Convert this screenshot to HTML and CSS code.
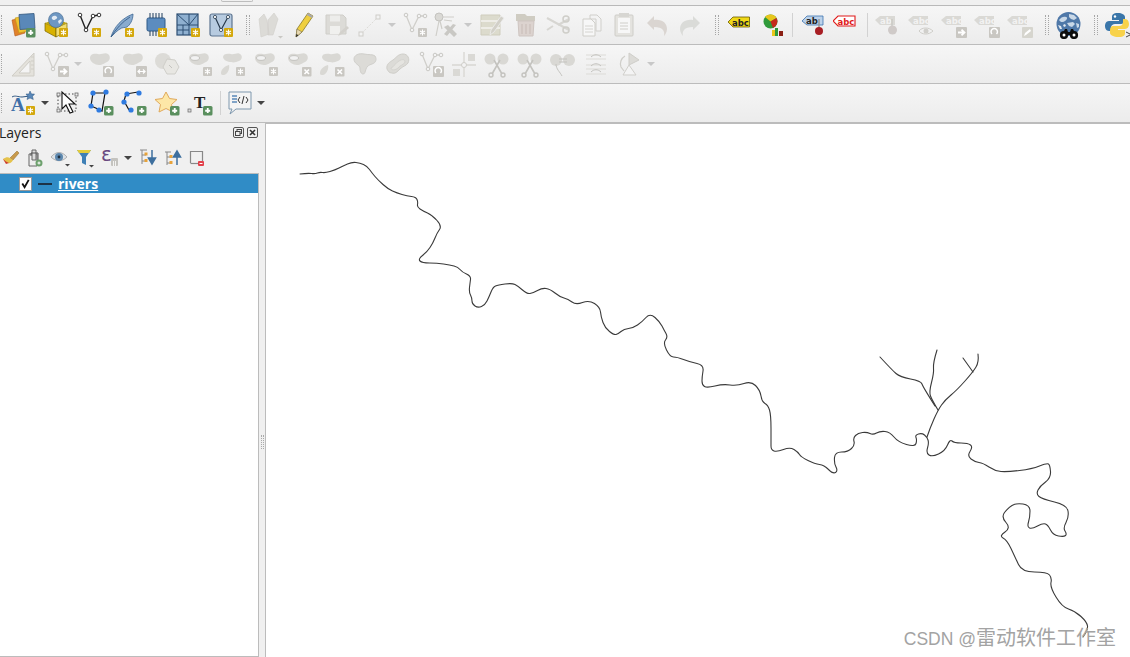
FILE: index.html
```html
<!DOCTYPE html>
<html lang="en">
<head>
<meta charset="utf-8">
<title>QGIS</title>
<link rel="stylesheet" href="styles.css">
</head>
<body>
<svg class="defs" aria-hidden="true">
  <defs>
    <g id="bp"><rect x="17" y="17" width="9.5" height="9.5" rx="1.5" fill="#5a8f5e"/><path d="M21.75 19v5M19.2 21.75h5" stroke="#fff" stroke-width="1.8"/></g>
    <g id="bs"><rect x="17" y="17" width="9" height="9" rx="1" fill="#d4a80c"/><path d="M21.5 18.5v6M19 20l5 3M24 20l-5 3" stroke="#fff" stroke-width="1.1"/></g>
    <g id="gs"><rect x="17" y="17" width="9" height="9" rx="1" fill="#c9c7c2"/><path d="M21.5 18.5v6M19 20l5 3M24 20l-5 3" stroke="#fff" stroke-width="1.1"/></g>
    <g id="gx"><rect x="17" y="17" width="9.5" height="9.5" rx="1" fill="#c9c7c2"/><path d="M19.5 19.5l4.5 4.5M24 19.5l-4.5 4.5" stroke="#fff" stroke-width="1.6"/></g>
    <g id="gr"><rect x="16" y="16" width="11" height="11" rx="1" fill="#c9c7c2"/><path d="M18 21.5h5.5M21.5 18.6l3 2.9-3 2.9" fill="none" stroke="#fff" stroke-width="1.8"/></g>
    <g id="grot"><rect x="16" y="16" width="11" height="11" rx="1" fill="#c9c7c2"/><path d="M19 23a3.2 3.2 0 1 1 4.5 0" fill="none" stroke="#fff" stroke-width="1.5"/></g>
    <g id="blob"><path d="M3 8c0-4 4-5 8-4 3 1 7-2 10 0 3 2 2 7-1 8-3 1-4 3-8 3-4 0-9-3-9-7z" fill="#d9d8d4"/></g>
    <g id="ring"><path d="M3 8c0-4 4-5 8-4 3 1 7-2 10 0 3 2 2 7-1 8-3 1-4 3-8 3-4 0-9-3-9-7z" fill="#d9d8d4"/><ellipse cx="9" cy="8" rx="4.5" ry="2.4" fill="#f2f2f2" stroke="#c4c3bf"/></g>
    <g id="two"><path d="M4 7c0-3 4-4 8-3 3 1 7-2 9 0 3 2 2 6-1 7-3 1-5 2-8 1-3 0-8-2-8-5z" fill="#d9d8d4"/><path d="M2 23c0-4 4-7 8-8 1 3-1 9-5 10-2 0-3 0-3-2z" fill="#d9d8d4"/></g>
    <g id="gv"><path d="M5 4l6 15 7-14h5" fill="none" stroke="#d0cfcb" stroke-width="1.3"/><g fill="#f3f3f3" stroke="#c9c8c4"><circle cx="5" cy="4" r="1.8"/><circle cx="11" cy="19" r="1.8"/><circle cx="18" cy="5" r="1.8"/><circle cx="24" cy="5" r="1.8"/></g></g>
    <g id="dv"><path d="M5 4l6 15 7-14 6-1" fill="none" stroke="#222" stroke-width="1.4"/><g fill="#fff" stroke="#333"><circle cx="5" cy="4" r="1.8"/><circle cx="11" cy="19" r="1.8"/><circle cx="18" cy="5" r="1.8"/><circle cx="24" cy="4" r="1.8"/></g></g>
    <g id="gtag"><path d="M1 9l5-4h15v9H6z" fill="#dad9d5"/></g>
    <g id="scis"><circle cx="7" cy="9" r="5.5" fill="#d9d8d4"/><circle cx="20" cy="9" r="5.5" fill="#d9d8d4"/><path d="M11 10l8 14M17 10l-8 14" stroke="#c4c3bf" stroke-width="1.6"/><circle cx="8" cy="25" r="2" fill="none" stroke="#c4c3bf" stroke-width="1.4"/><circle cx="20" cy="25" r="2" fill="none" stroke="#c4c3bf" stroke-width="1.4"/></g>
  </defs>
</svg>

<div class="strip"><span class="strip-tab"></span></div>

<div class="toolbar">
  <span class="h h-first"><i></i></span>
  <span class="b"><svg viewBox="0 0 28 28"><path d="M3 9l10-2 3 15-10 3z" fill="#e0822a" stroke="#b5591a" stroke-width=".6"/><path d="M6 7l9-2 4 15-9 2z" fill="#f0c330" stroke="#c09512" stroke-width=".6"/><path d="M10 3.500l15-1 1 15-15 1z" fill="#5a88b8" stroke="#34587f" stroke-width=".8"/><use href="#bp"/></svg></span>
  <span class="b"><svg viewBox="0 0 28 28"><path d="M3 12l11 5v9L3 20z" fill="#d8b100" stroke="#7a6400" stroke-width=".7"/><path d="M14 17l11-5v8l-11 6z" fill="#f2dd70" stroke="#7a6400" stroke-width=".7"/><path d="M3 12l11-4 11 4-11 5z" fill="#c0a510"/><circle cx="14" cy="9" r="7.500" fill="#6e97c2" stroke="#43688f" stroke-width=".6"/><path d="M10 6c2-2 4-1 5 0s-2 3-3 3-3-1-2-3zM16 10l3-2 1 2-3 3z" fill="#e3ebf3"/><use href="#bs"/></svg></span>
  <span class="b"><svg viewBox="0 0 28 28"><use href="#dv"/><use href="#bs"/></svg></span>
  <span class="b"><svg viewBox="0 0 28 28"><path d="M3 26C6 16 14 7 25 3c0 6-3 11-6 13-2 1-5 0-7 2-2 1-4 3-6 5z" fill="#89abcf" stroke="#3f6894" stroke-width=".8"/><path d="M3 26C8 18 14 11 22 6" fill="none" stroke="#2f5681" stroke-width=".8"/><use href="#bs"/></svg></span>
  <span class="b"><svg viewBox="0 0 28 28"><rect x="6" y="7" width="18" height="13" rx="1.500" fill="#5c8cbf" stroke="#2f5a88"/><path d="M9 7V2M12 7V2M15 7V2M18 7V2M21 7V2M9 25v-5M12 25v-5M15 25v-5" stroke="#1e3c5c" stroke-width="1"/><use href="#bs"/></svg></span>
  <span class="b"><svg viewBox="0 0 28 28"><rect x="3" y="3" width="21" height="21" fill="#8fb0d0" stroke="#2d4f73" stroke-width="1.200"/><path d="M3 3l12 11V3M15 14L24 3M3 14h21M15 14v10M9 14v10" fill="none" stroke="#2d4f73" stroke-width="1"/><path d="M3 19h12" stroke="#2d4f73"/><use href="#bs"/></svg></span>
  <span class="b"><svg viewBox="0 0 28 28"><rect x="3" y="3" width="22" height="22" rx="2" fill="#b7cbe0" stroke="#5d7590" stroke-width="1.200"/><path d="M8 6l6 13 7-13" fill="none" stroke="#26384b" stroke-width="1.200"/><g fill="#fff" stroke="#26384b" stroke-width=".8"><circle cx="8" cy="6" r="1.600"/><circle cx="14" cy="19" r="1.600"/><circle cx="21" cy="6" r="1.600"/></g><use href="#bs"/></svg></span>
  <span class="h"><i></i></span>
  <span class="b"><svg viewBox="0 0 28 28"><path d="M5 26L3 8l5-5 3 6 2 14zM12 24L12 9l6-7 4 6-5 16z" fill="#dcdbd7" stroke="#d0cfca" stroke-width=".6"/><path d="M22 25h5l-2.500 2.500z" fill="#c9c8c4"/></svg></span>
  <span class="b"><svg viewBox="0 0 28 28"><path d="M7 26l1-8L19 2l5 3-11 16z" fill="#efcf3f" stroke="#8a7a2a" stroke-width=".8"/><path d="M19 2l5 3-1.200 2-5-3z" fill="#aaa"/><path d="M7 26l1-8 5 3z" fill="#e8d9b0" stroke="#6b6348" stroke-width=".5"/><path d="M7 26l.4-3 2 1.200z" fill="#222"/></svg></span>
  <span class="b"><svg viewBox="0 0 28 28"><path d="M4 4h17l3 3v16H4z" fill="#dcdbd7" stroke="#cfcec9"/><rect x="8" y="4.500" width="10" height="6" fill="#ededeb"/><rect x="8" y="15" width="10" height="8" fill="#f0f0ee"/><path d="M16 25l2-4 7-6 2 2-7 6z" fill="#d3d1cc"/></svg></span>
  <span class="b"><svg viewBox="0 0 28 28"><path d="M7 22L22 7" stroke="#dcdbd7" stroke-dasharray="2 1.500"/><rect x="4" y="21" width="4" height="4" fill="#f3f3f3" stroke="#cfcec9"/><rect x="21" y="4" width="4" height="4" fill="#f3f3f3" stroke="#cfcec9"/></svg></span>
  <span class="a a13 off"></span>
  <span class="b"><svg viewBox="0 0 28 28"><use href="#gv"/><use href="#gs"/></svg></span>
  <span class="b b29"><svg viewBox="0 0 28 28"><circle cx="7" cy="6" r="4" fill="#dad9d5" stroke="#c4c3bf"/><path d="M4 25l3-15M8 10l2 8M10 6l12 0M12 9l8 1" stroke="#cfcec9" stroke-width="1.200"/><path d="M12 16l4-2 9 9-3 3-9-9zM21 13l3 1-9 11-3-2z" fill="#c9c8c4"/></svg></span>
  <span class="a a15 off"></span>
  <span class="b"><svg viewBox="0 0 28 28"><path d="M3 4h19v20H3z" fill="#dcdbcd" stroke="#cfcdbd"/><path d="M3 10h19M3 17h19" stroke="#f3f3f0" stroke-width="1.400"/><path d="M12 24l1-5L23 5l3 2-10 14z" fill="#d2d0c8" stroke="#eee" stroke-width=".8"/></svg></span>
  <span class="b"><svg viewBox="0 0 28 28"><path d="M5 3h9l2 2h8v5H5z" fill="#cfccc2"/><path d="M7 10h16l-1 15H8z" fill="#dcd3cf" stroke="#cec5c1"/><path d="M11 13v10M15 13v10M19 13v10" stroke="#c7bbb6"/></svg></span>
  <span class="b"><svg viewBox="0 0 28 28"><path d="M3 7l22 12M3 19l6-4M25 8L14 14" stroke="#d7d6d2" stroke-width="2"/><circle cx="22" cy="8" r="3" fill="none" stroke="#cfcec9" stroke-width="1.500"/><circle cx="22" cy="19" r="3" fill="none" stroke="#cfcec9" stroke-width="1.500"/></svg></span>
  <span class="b"><svg viewBox="0 0 28 28"><path d="M13 4h7l4 4v12h-5V8h-6z" fill="#f3f3f3" stroke="#d0cfcb"/><path d="M6 8h8l4 4v13H6z" fill="#f7f7f7" stroke="#cfcec9"/><path d="M8 15h8M8 18h8M8 21h8" stroke="#d5d4d0"/></svg></span>
  <span class="b"><svg viewBox="0 0 28 28"><rect x="5" y="4" width="18" height="21" rx="1" fill="#e4e3df" stroke="#cecdc8"/><rect x="8" y="7" width="12" height="15" fill="#f7f7f7"/><rect x="9" y="2" width="10" height="4" fill="#d7d6d2"/><path d="M10 12h8M10 15h8M10 18h8" stroke="#cfcec9"/></svg></span>
  <span class="b"><svg viewBox="0 0 28 28"><path d="M4 12l7-7v4c8-1 13 3 13 9 0 3-2 6-3 7 1-5-1-9-10-9v3z" fill="#dad5d1"/></svg></span>
  <span class="b"><svg viewBox="0 0 28 28"><path d="M24 12l-7-7v4c-8-1-13 3-13 9 0 3 2 6 3 7-1-5 1-9 10-9v3z" fill="#dadbd8"/></svg></span>
  <span class="h"><i></i></span>
  <span class="b"><svg viewBox="0 0 28 28"><path d="M3 11l5-5h16.500v10H8z" fill="#f0d817" stroke="#6b5c00" stroke-width=".8"/><text x="7" y="14.500" class="ic-t">abc</text></svg></span>
  <span class="b"><svg viewBox="0 0 28 28"><circle cx="12.500" cy="10.500" r="7" fill="#2f9a3a"/><path d="M7 6a7 7 0 0 1 11.500 1l-6 3.500z" fill="#e8c61c"/><path d="M12.500 10.500l6-3.500a7 7 0 0 1-3.500 10z" fill="#c52a1c"/><rect x="14" y="19" width="3" height="6" fill="#e8c61c"/><rect x="17" y="17" width="3" height="8" fill="#2f9a3a"/><rect x="21" y="20" width="4" height="5" fill="#8a1f14"/></svg></span>
  <span class="s"></span>
  <span class="b"><svg viewBox="0 0 28 28"><path d="M2 10l5-5h16v9H7z" fill="#bcd2ea" stroke="#3e74b0" stroke-width=".8"/><text x="6" y="13" class="ic-t">ab</text><path d="M19 8v10" stroke="#999" stroke-width="1.500"/><circle cx="19" cy="20" r="4" fill="#a81e24"/></svg></span>
  <span class="b"><svg viewBox="0 0 28 28"><path d="M0 10l5-5h17v10H5z" fill="#fff" stroke="#e01b1b" stroke-width="1.100"/><text x="4.500" y="13.500" class="ic-t ic-red">abc</text></svg></span>
  <span class="s s8"></span>
  <span class="b"><svg viewBox="0 0 28 28"><use href="#gtag"/><text x="6" y="13" class="ic-t ic-g">ab</text><path d="M18 8v8" stroke="#c9c8c4" stroke-width="1.500"/><circle cx="18.500" cy="19" r="4.500" fill="#cfcac8"/></svg></span>
  <span class="b"><svg viewBox="0 0 28 28"><use href="#gtag"/><text x="6" y="13" class="ic-t ic-g">abc</text><path d="M12 20c3-4 10-4 14 0-4 4-11 4-14 0z" fill="#f1f1f1" stroke="#cfcec9"/><circle cx="19" cy="20" r="2.500" fill="#d0cfcb"/></svg></span>
  <span class="b"><svg viewBox="0 0 28 28"><use href="#gtag"/><text x="6" y="13" class="ic-t ic-g">abc</text><use href="#gr"/></svg></span>
  <span class="b"><svg viewBox="0 0 28 28"><use href="#gtag"/><text x="6" y="13" class="ic-t ic-g">abc</text><use href="#grot"/></svg></span>
  <span class="b"><svg viewBox="0 0 28 28"><use href="#gtag"/><text x="6" y="13" class="ic-t ic-g">abc</text><rect x="16" y="16" width="11" height="11" rx="1" fill="#d6d5ce"/><path d="M18 25l1-3 5-4 1 2-5 4z" fill="#fff"/></svg></span>
  <span class="h"><i></i></span>
  <span class="b"><svg viewBox="0 0 28 28"><circle cx="13.500" cy="13" r="12" fill="#4f78a8"/><path d="M4 9c2-3 5-4 7-3 2 0 1 3-1 4-2 2-5 1-6-1zM14 3l5 1 3 3-3 2-3-1-2-2zM12 12l6-1 2 2-3 3-3-1zM21 12l3 1 0 3-2 1z" fill="#c9d8e7"/><path d="M3 14l3 1 1 3-2 0zM9 13l2 1-1 2-2-1z" fill="#e2e9f0"/><path d="M7 24l3-6h2l1 3h2l1-3h2l3 6z" fill="#0d0d0d"/><circle cx="9" cy="24" r="2.800" fill="#fff" stroke="#0d0d0d" stroke-width="2.600"/><circle cx="19" cy="24" r="2.800" fill="#fff" stroke="#0d0d0d" stroke-width="2.600"/></svg></span>
  <span class="h"><i></i></span>
  <span class="b"><svg viewBox="0 0 28 28"><path d="M14 2c-5 0-6 2-6 4v3h7v1H5c-3 0-4 3-4 5s1 5 4 5h2v-3c0-3 2-4 4-4h6c2 0 4-2 4-4V6c0-2-3-4-7-4z" fill="#3a76a9"/><path d="M14 25c5 0 6-2 6-4v-3h-7v-1h7c3 0 4-3 4-5s-1-5-4-5h-2v3c0 3-2 4-4 4H8c-2 0-3 2-3 4v3c0 2 4 4 8 4z" fill="#f8d24a" transform="translate(1 1)"/><circle cx="11" cy="5.500" r="1.200" fill="#fff"/><path d="M22 21l5 2.500-5 2.500" fill="none" stroke="#444"/></svg></span>
</div>

<div class="toolbar">
  <span class="h h-first"><i></i></span>
  <span class="b"><svg viewBox="0 0 28 28"><path d="M3 26L25 3v23z" fill="#e4e2dc" stroke="#cfcdc6"/><path d="M10 23l11-12v12z" fill="#f4f4f4" stroke="#cfcdc6"/><path d="M22 7h3M22 11h3M22 15h3M22 19h3" stroke="#cfcdc6"/></svg></span>
  <span class="b"><svg viewBox="0 0 28 28"><use href="#gv"/><use href="#gr"/></svg></span>
  <span class="a off"></span>
  <span class="b"><svg viewBox="0 0 28 28"><use href="#blob"/><use href="#grot"/></svg></span>
  <span class="b"><svg viewBox="0 0 28 28"><use href="#blob"/><rect x="16" y="16" width="11" height="11" rx="1" fill="#c9c7c2"/><path d="M18 21.500h7M20 19.500l-2 2 2 2M23 19.500l2 2-2 2" fill="none" stroke="#fff" stroke-width="1.200"/></svg></span>
  <span class="b"><svg viewBox="0 0 28 28"><circle cx="10" cy="11" r="8" fill="#dcdbd7"/><path d="M14 9l8 1 4 7-4 7h-8l-4-7z" fill="#e8e7e3" stroke="#cfcec9"/><path d="M16 15l3 3" stroke="#c4c3bf"/></svg></span>
  <span class="b"><svg viewBox="0 0 28 28"><use href="#ring"/><use href="#gs"/></svg></span>
  <span class="b"><svg viewBox="0 0 28 28"><use href="#two"/><use href="#gs"/></svg></span>
  <span class="b"><svg viewBox="0 0 28 28"><use href="#ring"/><use href="#gs"/></svg></span>
  <span class="b"><svg viewBox="0 0 28 28"><use href="#ring"/><use href="#gx"/></svg></span>
  <span class="b"><svg viewBox="0 0 28 28"><use href="#two"/><use href="#gx"/></svg></span>
  <span class="b"><svg viewBox="0 0 28 28"><path d="M3 9c0-4 5-6 10-5 4 1 9 0 11 2 2 3 1 7-3 8-3 1-5 2-6 5-1 3-1 5-3 5s-3-3-3-6c0-3-6-4-6-9z" fill="#dcdbd7" stroke="#d0cfcb"/></svg></span>
  <span class="b"><svg viewBox="0 0 28 28"><path d="M3 19c-1-5 3-7 6-9 3-2 5-6 10-6 5 0 7 5 5 9-2 3-5 3-8 6-3 3-5 5-8 4-3 0-4-2-5-4z" fill="#dcdbd7" stroke="#cfcec9"/><path d="M7 18c3-1 4-5 8-7 3-2 6-2 6 1-1 3-5 3-7 6-2 2-7 3-7 0z" fill="#e5e4e0" stroke="#d4d3cf"/></svg></span>
  <span class="b"><svg viewBox="0 0 28 28"><use href="#gv"/><use href="#grot"/></svg></span>
  <span class="b"><svg viewBox="0 0 28 28"><path d="M14 2v25M2 15h24" stroke="#d7d6d2" stroke-width="1.300"/><circle cx="14" cy="15" r="2.500" fill="#f3f3f3" stroke="#cfcec9"/><rect x="18" y="4" width="7" height="7" fill="#dad9d5"/><rect x="3" y="19" width="7" height="7" fill="#dad9d5"/></svg></span>
  <span class="b"><svg viewBox="0 0 28 28"><use href="#scis"/></svg></span>
  <span class="b"><svg viewBox="0 0 28 28"><use href="#scis"/></svg></span>
  <span class="b"><svg viewBox="0 0 28 28"><circle cx="7" cy="10" r="6" fill="#d9d8d4"/><circle cx="20" cy="10" r="6" fill="#d9d8d4"/><path d="M10 9h8M10 12h8M7 14c0 5 4 8 6 12" fill="none" stroke="#c4c3bf"/></svg></span>
  <span class="b"><svg viewBox="0 0 28 28"><path d="M4 5h20M4 15h20M4 24h20M4 9h20M4 19h20" stroke="#dcdbd7"/><path d="M9 7c3-3 7-3 10 0M9 16c3-3 7-3 10 0M9 22c3-3 7-3 10 0" fill="none" stroke="#c4c3bf"/></svg></span>
  <span class="b"><svg viewBox="0 0 28 28"><path d="M14 3l10 7-10 5z" fill="#dcdbd7" stroke="#cfcec9"/><path d="M14 15l7 10H8z" fill="#f4f4f4" stroke="#d0cfcb"/><path d="M10 6a9 9 0 0 0-4 11l3 4" fill="none" stroke="#cfcec9" stroke-width="1.200"/></svg></span>
  <span class="a off"></span>
</div>

<div class="toolbar">
  <span class="h h-first"><i></i></span>
  <span class="b"><svg viewBox="0 0 28 28"><path d="M3 8c3-2 6 0 10 0 3 0 5-1 8-1" fill="none" stroke="#2f5681"/><text x="2" y="22" class="ic-a">A</text><path d="M21 2l1.500 3h3l-2 2.500.8 3L21 9l-3 1.500.8-3L17 5h3z" fill="#5a88b8" stroke="#2f5681" stroke-width=".5"/><use href="#bs"/></svg></span>
  <span class="a"></span>
  <span class="b"><svg viewBox="0 0 28 28"><rect x="4" y="5" width="18" height="17" fill="none" stroke="#444" stroke-dasharray="1.500 2"/><rect x="3" y="4" width="3" height="3" fill="#eee" stroke="#555" stroke-width=".7"/><rect x="21" y="4" width="3" height="3" fill="#eee" stroke="#555" stroke-width=".7"/><rect x="3" y="20" width="3" height="3" fill="#eee" stroke="#555" stroke-width=".7"/><path d="M8 3v17l4-4 4 8 3-1-4-8h6z" fill="#fff" stroke="#111" stroke-width="1.100"/></svg></span>
  <span class="b"><svg viewBox="0 0 28 28"><path d="M6 4h12l-3 18-4-2-7-3z" fill="#dfe7f2" fill-opacity=".35" stroke="#111" stroke-width="1.200"/><g fill="#2f7be0"><circle cx="6" cy="4" r="2.600"/><circle cx="19" cy="3" r="2.600"/><circle cx="4" cy="17" r="2.600"/><circle cx="12" cy="21" r="2.600"/></g><use href="#bp"/></svg></span>
  <span class="b"><svg viewBox="0 0 28 28"><path d="M6 5l12-2M6 5L4 12l5 9" fill="none" stroke="#111" stroke-width="1.200"/><g fill="#2f7be0"><circle cx="7" cy="5" r="2.600"/><circle cx="19" cy="4" r="2.600"/><circle cx="4" cy="13" r="2.600"/><circle cx="11" cy="21" r="2.600"/></g><use href="#bp"/></svg></span>
  <span class="b"><svg viewBox="0 0 28 28"><path d="M13 3l3.500 6.500 7.500 1-5.500 5 1.500 7.500-7-3.500-7 3.500 1.500-7.500L2 10.500l7.500-1z" fill="#fde7a7" stroke="#e0a95c"/><use href="#bp"/></svg></span>
  <span class="b"><svg viewBox="0 0 28 28"><text x="8" y="19" class="ic-tt">T</text><rect x="2" y="20" width="3" height="3" fill="#ddd" stroke="#666" stroke-width=".7"/><use href="#bp"/></svg></span>
  <span class="s s8"></span>
  <span class="b b31"><svg viewBox="0 0 28 28"><path d="M3 3h22v17H10l-6 5 2-5H3z" fill="#f4f4f4" stroke="#7e98ae"/><path d="M6 7h5M6 10h5M6 13h5" stroke="#5a88b8" stroke-width="1.300"/><path d="M14 8l-2 3 2 3M20 8l2 3-2 3M18 7l-2 8" fill="none" stroke="#333"/></svg></span>
  <span class="a"></span>
</div>

<main class="workspace">
  <aside class="dock">
    <div class="dock-title">
      <span class="dock-name">Layers</span>
      <span class="dock-btns">
        <svg class="dock-btn" viewBox="0 0 11 11"><rect x=".5" y=".5" width="10" height="10" rx="1.500" fill="none" stroke="#555"/><rect x="4" y="2.500" width="4.500" height="4" fill="none" stroke="#444"/><rect x="2.500" y="4.500" width="4.500" height="4" fill="#eee" stroke="#444"/></svg>
        <svg class="dock-btn" viewBox="0 0 11 11"><rect x=".5" y=".5" width="10" height="10" rx="1.500" fill="none" stroke="#555"/><path d="M3 3l5 5M8 3L3 8" stroke="#333" stroke-width="1.600"/></svg>
      </span>
    </div>
    <div class="dock-tools">
      <span class="p p22"><svg viewBox="0 0 20 20"><path d="M9 10l7-7 2 2-6 7z" fill="#c99a4b" stroke="#8c6a2c" stroke-width=".5"/><path d="M2 11c3-2 5-2 7-1l3 2c-1 2-3 4-5 3-2 0-4-2-5-4z" fill="#e5c34c"/><path d="M2 11c2 2 4 3 6 4l-3 1z" fill="#cc3c2f"/></svg></span>
      <span class="p p25"><svg viewBox="0 0 20 20"><path d="M4 6h8v12H4z" fill="#eee" stroke="#666"/><path d="M7 2h4v10H7z" fill="#ddd" stroke="#666"/><path d="M6 8v-3h7v7" fill="none" stroke="#555"/><circle cx="14" cy="15" r="3.500" fill="#6ea16e"/><path d="M12.500 15h3M14 13.500v3" stroke="#fff"/></svg></span>
      <span class="p p25"><svg viewBox="0 0 20 20"><path d="M1 9c5-6 11-6 16 0-5 5-11 5-16 0z" fill="#dde2e6" stroke="#999" stroke-width=".7"/><circle cx="9" cy="9" r="4" fill="#5d87ad"/><circle cx="9" cy="9" r="1.400" fill="#203040"/><path d="M15 16h5l-2.500 2.500z" fill="#444"/></svg></span>
      <span class="p p25"><svg viewBox="0 0 20 20"><path d="M2 2h14l-5 7v8l-4-2V9z" fill="#3e7fb5"/><path d="M2 2h14l-2 3H4z" fill="#e3cc3a"/><path d="M14 17h5l-2.500 2.500z" fill="#444"/></svg></span>
      <span class="p p26"><svg viewBox="0 0 20 20"><text x="1" y="13" class="ic-e">ε</text><rect x="11" y="10" width="7" height="8" rx="1" fill="#c4c3bf"/><path d="M13.500 18v-5M15.500 18v-5" stroke="#fff" stroke-width=".8"/></svg></span>
      <span class="a a10"></span>
      <span class="p p30"><svg viewBox="0 0 20 20"><path d="M2 2h7M4 2v14M4 7h4M4 13h4" fill="none" stroke="#888"/><rect x="6.500" y="4.500" width="3" height="3" fill="#e8a33a"/><rect x="6.500" y="11" width="3" height="3" fill="#e8a33a"/><path d="M14 2v10M10.500 10l3.500 6 3.500-6z" fill="#3e6f9e" stroke="#3e6f9e" stroke-width="1.500"/></svg></span>
      <span class="p p20"><svg viewBox="0 0 20 20"><path d="M2 4h6M4 4v13M4 9h4M4 15h4" fill="none" stroke="#888"/><rect x="6.500" y="7" width="3" height="3" fill="#e8a33a"/><rect x="6.500" y="13" width="3" height="3" fill="#e8a33a"/><path d="M14 17V8M10.500 9L14 3l3.500 6z" fill="#3e6f9e" stroke="#3e6f9e" stroke-width="1.500"/></svg></span>
      <span class="p p28"><svg viewBox="0 0 20 20"><path d="M3.500 15V3.500h12V13" fill="none" stroke="#888" stroke-width="1.200"/><path d="M3.500 15.500H11" stroke="#888" stroke-width="1.200"/><rect x="11" y="13" width="6" height="5" rx="1" fill="#e2404a"/><path d="M12.500 15.500h3" stroke="#fff"/></svg></span>
    </div>
    <div class="tree">
      <div class="tree-row">
        <span class="check"><svg viewBox="0 0 12 12"><path d="M2.500 6l2.500 4L9.500 2" fill="none" stroke="#111" stroke-width="2"/></svg></span>
        <span class="sym"></span>
        <span class="layer-name">rivers</span>
      </div>
    </div>
  </aside>
  <div class="splitter"><span class="grip"></span></div>
  <section class="canvas">
    <svg class="map" viewBox="266 124 864 533">
      <g class="river">
        <path d="M300 174Q308 173 311.500 173.500Q315 174 317.500 173Q320 172 322.500 172.500Q325 173 330 171.500Q335 170 339 168Q343 166 347.500 164Q352 162 356 162.500Q360 163 363.500 164.500Q367 166 369.500 169.500Q372 173 375 176.500Q378 180 383 184.500Q388 189 392.500 191Q397 193 402 194.500Q407 196 411.500 196.500Q416 197 417 199.500Q418 202 417.500 204.500Q417 207 420 209Q423 211 427.500 213Q432 215 437 220.500Q442 226 439.500 229.500Q437 233 435 238Q433 243 430 247.500Q427 252 422.500 255.500Q418 259 420 261Q422 263 429.500 263Q437 263 443.500 264Q450 265 454 266Q458 267 460 269.500Q462 272 466.500 274Q471 276 470.500 279.500Q470 283 469.500 287.500Q469 292 470.500 295Q472 298 472 301Q472 304 475 306Q478 308 481.500 306.500Q485 305 487 301Q489 297 491 292Q493 287 495.500 286Q498 285 505 284Q512 283 515 284.500Q518 286 522.500 290Q527 294 530 293.500Q533 293 537.500 290.500Q542 288 546 288.500Q550 289 555 293Q560 297 564 298Q568 299 572 302Q576 305 582.500 302.500Q589 300 594.500 303.500Q600 307 600.500 312Q601 317 603 322.500Q605 328 609.500 331.500Q614 335 616 334.500Q618 334 621 331.500Q624 329 628.500 328.500Q633 328 637.500 325Q642 322 646 317.500Q650 313 655 317.500Q660 322 662 326Q664 330 666 333.500Q668 337 665.500 340Q663 343 666.500 350Q670 357 673.500 357Q677 357 683.500 359.500Q690 362 697 363.500Q704 365 703 371Q702 377 702 381Q702 385 704.500 386.500Q707 388 715 386Q723 384 730 385Q737 386 744 383.500Q751 381 755.500 385.500Q760 390 761 396Q762 402 765 403.500Q768 405 769.500 410Q771 415 771 428.500Q771 442 771 446Q771 450 774 451Q777 452 783.500 449.500Q790 447 794 449.500Q798 452 799.500 454.500Q801 457 808 460.500Q815 464 819.500 464.500Q824 465 828.500 469.500Q833 474 835.500 472.500Q838 471 836 467Q834 463 834.500 457.500Q835 452 841.500 452Q848 452 851.500 448.500Q855 445 854 441.500Q853 438 855.500 435.500Q858 433 862.500 432.500Q867 432 870 433.500Q873 435 876.500 433Q880 431 885 431.500Q890 432 894 437Q898 442 906.500 444.500Q915 447 916 443.500Q917 440 916 437.500Q915 435 918.500 434Q922 433 924.500 435Q927 437 928 440Q929 443 927.500 448Q926 453 929 455Q932 457 938.500 454Q945 451 947.500 445Q950 439 952 441Q954 443 961 443Q968 443 970.500 445Q973 447 970 451.500Q967 456 971 459Q975 462 979 462.500Q983 463 989 467Q995 471 1001 471.500Q1007 472 1019.500 470.500Q1032 469 1039.500 466Q1047 463 1048.500 464Q1050 465 1050.500 471.500Q1051 478 1045.500 482Q1040 486 1038 490Q1036 494 1039 496.500Q1042 499 1054.500 502Q1067 505 1068 511Q1069 517 1066 522.500Q1063 528 1065 531Q1067 534 1065.500 535.500Q1064 537 1058.500 536Q1053 535 1050.500 530Q1048 525 1045.500 524Q1043 523 1037.500 526Q1032 529 1029.500 528Q1027 527 1028.500 522Q1030 517 1030 511Q1030 505 1023 504Q1016 503 1012 505.500Q1008 508 1004.500 512.500Q1001 517 1006 522.500Q1011 528 1005 532Q999 536 1003 538Q1007 540 1011 548.500Q1015 557 1018.500 564.500Q1022 572 1034.500 572Q1047 572 1049.500 575Q1052 578 1051 582.500Q1050 587 1056 597Q1062 607 1068.500 609Q1075 611 1081 616.500Q1087 622 1087.500 626Q1088 630 1083 637"/>
        <path d="M927 437Q930 428 934 419Q938 410 941.500 405Q945 400 951 395Q957 390 965 381Q973 372 976 367Q979 362 978 354"/>
        <path d="M973 372Q968 365 963 358"/>
        <path d="M938 410Q932 400 930.500 396Q929 392 931.500 382.500Q934 373 933.500 368Q933 363 937 350"/>
        <path d="M935 406Q923 387 922 384Q921 381 910.500 379Q900 377 896 373.500Q892 370 880 357"/>
      </g>
    </svg>
    <span class="watermark"><span class="wm-latin">CSDN @</span><span class="wm-cjk">雷动软件工作室</span></span>
  </section>
</main>
</body>
</html>
```

FILE: styles.css
```css
* { box-sizing: border-box; }
html, body { margin: 0; height: 100%; }
body {
  width: 1130px;
  height: 657px;
  overflow: hidden;
  display: flex;
  flex-direction: column;
  background: #f0f0f0;
  font-family: "Open Sans", "Noto Sans", sans-serif;
  color: #222;
}
.defs { display: none; }

.strip {
  height: 6px;
  flex: none;
  background: #f0f0f0;
  border-bottom: 1px solid #b9b9b9;
  padding-left: 221px;
}
.strip-tab {
  display: block;
  width: 32px;
  height: 2px;
  border: 1px solid #bdbdbd;
  border-top: 0;
  border-radius: 0 0 2px 2px;
}

.toolbar {
  height: 39px;
  flex: none;
  display: flex;
  align-items: center;
  background: linear-gradient(#f6f6f6, #ececec);
  border-bottom: 1px solid #bcbcbc;
  overflow: hidden;
}
.b {
  flex: none;
  width: 33px;
  height: 38px;
  display: flex;
  align-items: center;
  justify-content: center;
}
.b svg { width: 28px; height: 28px; flex: none; display: block; }
.b29 { width: 29px; }
.b31 { width: 31px; }

.h {
  flex: none;
  width: 16px;
  height: 38px;
  padding-left: 9px;
  display: flex;
  align-items: center;
}
.h-first { width: 6px; padding-left: 1px; }
.h i {
  display: block;
  width: 4px;
  height: 20px;
  border-left: 1px dotted #a6a6a6;
  border-right: 1px dotted #a6a6a6;
}
.h-first i { width: 3px; border-right: 0; }

.a {
  flex: none;
  width: 12px;
  height: 38px;
  display: flex;
  align-items: center;
  justify-content: center;
}
.a::after {
  content: "";
  border-left: 4px solid transparent;
  border-right: 4px solid transparent;
  border-top: 4px solid #444;
}
.a.off::after { border-top-color: #c8c8c8; }
.a10 { width: 10px; height: 24px; }
.a13 { width: 13px; }
.a15 { width: 15px; }

.s {
  flex: none;
  width: 9px;
  height: 24px;
  display: flex;
  justify-content: center;
}
.s::after { content: ""; width: 1px; background: #d2d2d2; }
.s8 { width: 8px; }

.ic-t { font: bold 8.5px "DejaVu Sans", sans-serif; fill: #222; }
.ic-red { fill: #e01b1b; }
.ic-g { fill: #f2f2f2; }
.ic-a { font: bold 19px "Liberation Serif", serif; fill: #3f6fa8; }
.ic-tt { font: bold 17px "Liberation Serif", serif; fill: #222; }
.ic-e { font: 20px "DejaVu Sans", sans-serif; fill: #6a4a80; }

.workspace {
  flex: 1;
  min-height: 0;
  display: flex;
}
.dock {
  flex: none;
  width: 259px;
  display: flex;
  flex-direction: column;
}
.dock-title {
  height: 22px;
  flex: none;
  display: flex;
  align-items: center;
  justify-content: space-between;
  padding-right: 1px;
  padding-bottom: 4px;
}
.dock-name { font-size: 14px; margin-left: -1px; color: #222; }
.dock-btns { display: flex; gap: 3px; }
.dock-btn { width: 11px; height: 11px; display: block; }

.dock-tools {
  height: 28px;
  flex: none;
  display: flex;
  align-items: center;
  padding-bottom: 2px;
}
.p {
  flex: none;
  display: flex;
  justify-content: center;
  height: 20px;
}
.p svg { width: 20px; height: 20px; flex: none; display: block; overflow: visible; }
.p20 { width: 20px; }
.p22 { width: 22px; }
.p25 { width: 25px; }
.p26 { width: 26px; }
.p28 { width: 28px; }
.p30 { width: 30px; }

.tree {
  flex: 1;
  background: #fff;
  border: 1px solid #bcbcbc;
  border-left: 0;
}
.tree-row {
  height: 19px;
  background: #308cc6;
  display: flex;
  align-items: center;
  padding-left: 19px;
}
.check {
  width: 13px;
  height: 14px;
  flex: none;
  background: #fff;
  border: 1px solid #999;
  display: flex;
  align-items: center;
  justify-content: center;
}
.check svg { width: 11px; height: 11px; display: block; }
.sym {
  width: 14px;
  height: 2px;
  flex: none;
  margin-left: 6px;
  background: #1d3347;
}
.layer-name {
  margin-left: 6px;
  font-size: 14px;
  font-weight: 700;
  color: #fff;
  text-decoration: underline;
  line-height: 19px;
}

.splitter {
  flex: none;
  width: 6px;
  display: flex;
  align-items: center;
  justify-content: center;
  padding-top: 103px;
}
.grip {
  display: block;
  width: 3px;
  height: 14px;
  border-left: 1px dotted #aaa;
  border-right: 1px dotted #aaa;
}

.canvas {
  flex: 1;
  position: relative;
  background: #fff;
  border-left: 1px solid #bcbcbc;
  border-top: 1px solid #bcbcbc;
  min-width: 0;
}
.map { display: block; width: 864px; height: 533px; }
.river path {
  fill: none;
  stroke: #3a3a3a;
  stroke-width: 1.1;
  stroke-linejoin: round;
  stroke-linecap: round;
}
.watermark {
  position: absolute;
  right: 14px;
  bottom: 6px;
  line-height: 24px;
  color: #a3a3a3;
  white-space: nowrap;
}
.wm-latin { font: 17.5px/24px "Liberation Sans", sans-serif; }
.wm-cjk { font: 20px/24px "Liberation Sans", "Noto Sans CJK SC", sans-serif; }
```
